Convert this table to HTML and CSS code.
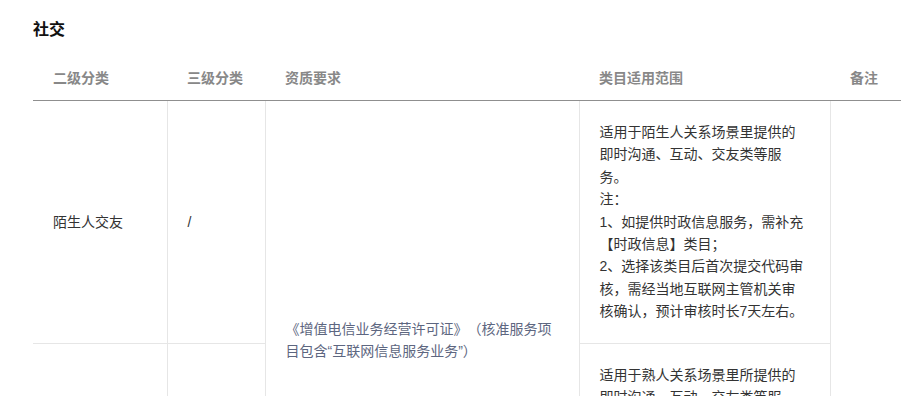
FILE: index.html
```html
<!DOCTYPE html>
<html lang="zh-CN">
   <head>
      <meta charset="UTF-8" />
      <meta name="viewport" content="width=device-width, initial-scale=1.0"/>
      <title>类目资质 - 社交</title>
      <link rel="stylesheet" href="styles.css">
   </head>
   <body>
      <div class="page">
         <h3 class="section-title">社交</h3>
         <!-- 社交类目表 -->
         <table class="cate-table">
            <colgroup>
               <col class="c-second">
               <col class="c-third">
               <col class="c-qual">
               <col class="c-scope">
               <col class="c-note">
            </colgroup>
            <thead>
               <tr>
                  <th>二级分类</th>
                  <th>三级分类</th>
                  <th>资质要求</th>
                  <th>类目适用范围</th>
                  <th>备注</th>
               </tr>
            </thead>
            <tbody>
               <tr>
                  <td>陌生人交友</td>
                  <td>/</td>
                  <td class="qual" rowspan="2">《增值电信业务经营许可证》（核准服务项目包含“互联网信息服务业务”）</td>
                  <td class="scope">适用于陌生人关系场景里提供的即时沟通、互动、交友类等服务。<br>注：<br>1、如提供时政信息服务，需补充【时政信息】类目；<br>2、选择该类目后首次提交代码审核，需经当地互联网主管机关审核确认，预计审核时长7天左右。</td>
                  <td rowspan="2"></td>
               </tr>
               <tr>
                  <td>熟人交友</td>
                  <td>/</td>
                  <td class="scope">适用于熟人关系场景里所提供的即时沟通、互动、交友类等服务。<br>注：<br>1、如提供时政信息服务，需补充【时政信息】类目；<br>2、选择该类目后首次提交代码审核，需经当地互联网主管机关审核。</td>
               </tr>
            </tbody>
         </table>
      </div>
   </body>
</html>
```

FILE: styles.css
```css
body {
margin: 0;
font-family: "Liberation Sans", "Noto Sans CJK SC", sans-serif;
background: #fff;
color: #333;
overflow: hidden;
text-spacing-trim: space-all;
}
.page {
padding: 18px 0 0 33px;
}
.section-title {
margin: 0 0 14px;
font-size: 16px;
line-height: 24px;
font-weight: bold;
color: #111;
}
.cate-table {
border-collapse: collapse;
table-layout: fixed;
width: 920px;
font-size: 14px;
}
.c-second { width: 134px; }
.c-third { width: 98px; }
.c-qual { width: 314px; }
.c-scope { width: 251px; }
.c-note { width: 123px; }
.cate-table th {
text-align: left;
font-weight: bold;
color: #888;
line-height: 22px;
padding: 11px 20px;
border-bottom: 1px solid #8f8f8f;
}
.cate-table td {
line-height: 22.4px;
padding: 20px;
vertical-align: middle;
border-right: 1px solid #e6e6e6;
border-bottom: 1px solid #e6e6e6;
}
.cate-table td.scope {
padding-right: 25px;
}
.cate-table td.qual {
padding-bottom: 26px;
color: #5d6680;
}
```
